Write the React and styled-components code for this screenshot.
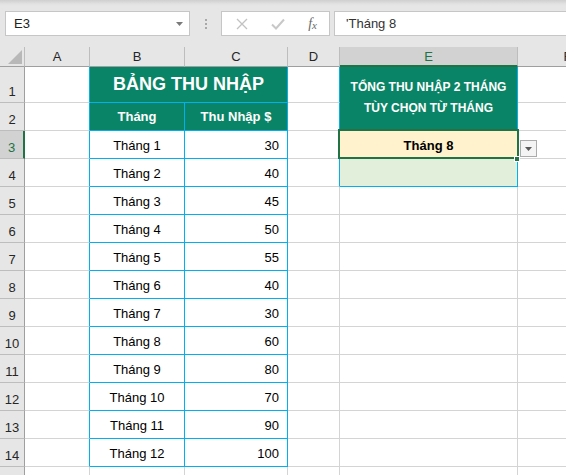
import React from 'react'
import styled, { createGlobalStyle } from 'styled-components';

const GREEN = '#0a8466';
const CYAN = '#00b0f0';
const GRID = '#d4d4d4';
const SEL = '#217346';

const GlobalStyle = createGlobalStyle`
    body{
        margin: 0;
        font-family: "Liberation Sans", Arial, sans-serif;
        background: #fff;
    }
`;

const rows = [
    ['Tháng 1', 30], ['Tháng 2', 40], ['Tháng 3', 45], ['Tháng 4', 50],
    ['Tháng 5', 55], ['Tháng 6', 40], ['Tháng 7', 30], ['Tháng 8', 60],
    ['Tháng 9', 80], ['Tháng 10', 70], ['Tháng 11', 90], ['Tháng 12', 100],
];

function App() {
    return (
        <Window>
            <GlobalStyle />
            <FormulaBar>
                <NameBox>
                    <span>E3</span>
                    <svg width="7" height="4" viewBox="0 0 7 4"><path d="M0 0 H7 L3.5 4 Z" fill="#7a7a7a"/></svg>
                </NameBox>
                <Grip><i/><i/><i/></Grip>
                <ActionBox>
                    <svg width="12" height="12" viewBox="0 0 12 12">
                        <path d="M1 1 L11 11 M11 1 L1 11" stroke="#c2c2c2" strokeWidth="1.3" fill="none"/>
                    </svg>
                    <svg width="14" height="12" viewBox="0 0 14 12">
                        <path d="M1 6.5 L5 10.5 L13 1.5" stroke="#c8c8c8" strokeWidth="2" fill="none"/>
                    </svg>
                    <Fx>f<sub>x</sub></Fx>
                </ActionBox>
                <FormulaInput>'Tháng 8</FormulaInput>
            </FormulaBar>

            <Sheet>
                <Corner><svg width="14" height="14" viewBox="0 0 14 14"><path d="M14 0 V14 H0 Z" fill="#b8b8b8"/></svg></Corner>
                {['A','B','C','D','E','F'].map(c => (
                    <ColHead key={c} $active={c === 'E'}>{c}</ColHead>
                ))}

                {/* row 1 */}
                <RowHead>1</RowHead>
                <Cell $rb={CYAN} />
                <TitleCell>BẢNG THU NHẬP</TitleCell>
                <Cell $rb={CYAN} />
                <NoteCell>TỔNG THU NHẬP 2 THÁNG<br/>TÙY CHỌN TỪ THÁNG</NoteCell>
                <Cell />

                {/* row 2 */}
                <RowHead>2</RowHead>
                <Cell $rb={CYAN} />
                <HeadCell>Tháng</HeadCell>
                <HeadCell>Thu Nhập $</HeadCell>
                <Cell $rb={CYAN} />
                <Cell />

                {rows.map(([m, v], i) => (
                    <React.Fragment key={m}>
                        <RowHead $active={i === 0}>{i + 3}</RowHead>
                        <Cell $rb={CYAN} />
                        <DataCell>{m}</DataCell>
                        <ValueCell>{v}</ValueCell>
                        <Cell $rb={i < 2 ? CYAN : GRID} />
                        {i === 0 && (
                            <PickCell>
                                Tháng 8
                                <Selection />
                                <FillHandle />
                                <DropButton>
                                    <svg width="7" height="4" viewBox="0 0 7 4"><path d="M0 0 H7 L3.5 4 Z" fill="#595959"/></svg>
                                </DropButton>
                            </PickCell>
                        )}
                        {i === 1 && <Cell $bg="#e2efda" $rb={CYAN} $bb={CYAN} />}
                        {i > 1 && <Cell />}
                        <Cell />
                    </React.Fragment>
                ))}

                {/* row 15, only its top edge shows */}
                <RowHead />
                <Cell /><Cell /><Cell /><Cell /><Cell /><Cell />
            </Sheet>
        </Window>
    )
}

const Window = styled.div`
    width: 566px;
    height: 475px;
    overflow: hidden;
    background: #e6e6e6;
`;

const FormulaBar = styled.div`
    height: 47px;
    box-sizing: border-box;
    padding-top: 11px;
    display: flex;
    align-items: flex-start;
    background: linear-gradient(#cfcfcf 0px, #e2e2e2 4px, #e6e6e6 6px);
`;

const Box = styled.div`
    height: 25px;
    box-sizing: border-box;
    background: #fff;
    border: 1px solid #c6c6c6;
    display: flex;
    align-items: center;
`;

const NameBox = styled(Box)`
    margin-left: 5px;
    width: 185px;
    padding: 0 6px 0 8px;
    justify-content: space-between;
    font-size: 13px;
    color: #222;
`;

const Grip = styled.div`
    width: 31px;
    height: 25px;
    display: flex;
    flex-direction: column;
    align-items: center;
    justify-content: center;
    gap: 2px;
    i{
        width: 2px;
        height: 2px;
        background: #a8a8a8;
    }
`;

const ActionBox = styled(Box)`
    width: 109px;
    padding: 0 12px 0 14px;
    justify-content: space-between;
`;

const Fx = styled.span`
    font-family: "Liberation Serif", serif;
    font-style: italic;
    font-size: 14px;
    color: #6a6a6a;
    sub{
        font-size: 11px;
        vertical-align: -1px;
    }
`;

const FormulaInput = styled(Box)`
    margin-left: 4px;
    flex: 1;
    margin-right: -4px;
    padding-left: 11px;
    font-size: 13px;
    color: #333;
`;

const Sheet = styled.div`
    display: grid;
    grid-template-columns: 25px 65px 95px 103px 52px 178px 100px;
    grid-template-rows: 20px 36px repeat(14, 28px);
    background: #fff;
`;

const Corner = styled.div`
    background: #e6e6e6;
    border-right: 1px solid #bdbdbd;
    border-bottom: 1px solid #9f9f9f;
    display: flex;
    align-items: flex-end;
    justify-content: flex-end;
    padding: 0 2px 2px 0;
`;

const ColHead = styled.div`
    background: ${p => p.$active ? '#d2d2d2' : '#e6e6e6'};
    border-right: 1px solid #bdbdbd;
    border-bottom: ${p => p.$active ? `2px solid ${SEL}` : '1px solid #9f9f9f'};
    display: flex;
    align-items: center;
    justify-content: center;
    font-size: 13px;
    color: ${p => p.$active ? SEL : '#262626'};
`;

const RowHead = styled.div`
    background: ${p => p.$active ? '#d2d2d2' : '#e6e6e6'};
    border-right: ${p => p.$active ? `2px solid ${SEL}` : '1px solid #9f9f9f'};
    border-bottom: 1px solid #bdbdbd;
    display: flex;
    align-items: flex-end;
    justify-content: center;
    padding-bottom: 3px;
    font-size: 13px;
    color: ${p => p.$active ? SEL : '#262626'};
`;

const Cell = styled.div`
    background: ${p => p.$bg || '#fff'};
    border-right: 1px solid ${p => p.$rb || GRID};
    border-bottom: 1px solid ${p => p.$bb || GRID};
    display: flex;
    align-items: center;
    font-size: 13px;
    color: #000;
`;

const TitleCell = styled(Cell).attrs({ $bg: GREEN, $rb: CYAN, $bb: CYAN })`
    grid-column: span 2;
    justify-content: center;
    color: #fff;
    font-weight: 700;
    font-size: 18px;
`;

const HeadCell = styled(Cell).attrs({ $bg: GREEN, $rb: CYAN, $bb: CYAN })`
    justify-content: center;
    color: #fff;
    font-weight: 700;
`;

const NoteCell = styled(Cell).attrs({ $bg: GREEN, $rb: CYAN, $bb: GREEN })`
    grid-row: span 2;
    justify-content: center;
    text-align: center;
    color: #fff;
    font-weight: 700;
    font-size: 12px;
    line-height: 21px;
    padding-bottom: 2px;
`;

const DataCell = styled(Cell).attrs({ $rb: CYAN, $bb: CYAN })`
    justify-content: center;
    padding-top: 2px;
`;

const ValueCell = styled(Cell).attrs({ $rb: CYAN, $bb: CYAN })`
    justify-content: flex-end;
    padding: 2px 8px 0 0;
`;

const PickCell = styled(Cell).attrs({ $bg: '#fff2cc', $rb: CYAN })`
    position: relative;
    justify-content: center;
    font-weight: 700;
    padding-top: 2px;
`;

const Selection = styled.div`
    position: absolute;
    left: -2px;
    top: -2px;
    width: 181px;
    height: 30px;
    box-sizing: border-box;
    border: 2px solid ${SEL};
    pointer-events: none;
`;

const FillHandle = styled.div`
    position: absolute;
    right: -3px;
    bottom: -4px;
    width: 6px;
    height: 6px;
    box-sizing: border-box;
    background: ${SEL};
    border: 1px solid #fff;
`;

const DropButton = styled.div`
    position: absolute;
    left: 180px;
    top: 9px;
    width: 17px;
    height: 17px;
    box-sizing: border-box;
    background: #f4f4f4;
    border: 1px solid #ababab;
    display: flex;
    align-items: center;
    justify-content: center;
`;

export default App;
